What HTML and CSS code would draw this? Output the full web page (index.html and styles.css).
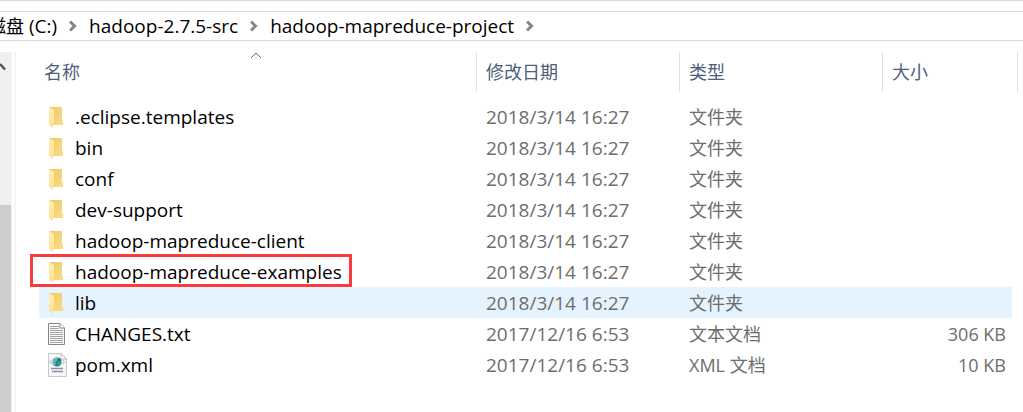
FILE: index.html
```html
<!DOCTYPE html>
<html lang="zh-CN">
<head>
<meta charset="utf-8">
<title>hadoop-mapreduce-project</title>
<link rel="stylesheet" href="styles.css">
</head>
<body>
<svg class="defs" width="0" height="0" aria-hidden="true">
  <defs>
    <linearGradient id="back" x1="0" y1="0" x2="1" y2="1"><stop offset="0" stop-color="#ebc968"/><stop offset="1" stop-color="#fddd85"/></linearGradient>
    <linearGradient id="front" x1="0" y1="0" x2="0" y2="1"><stop offset="0" stop-color="#ffeeb5"/><stop offset="1" stop-color="#fce094"/></linearGradient>
    <symbol id="folder" viewBox="0 0 20 24">
      <path d="M2 2H15V15L16 16V20H5L2 18Z" fill="url(#back)"/>
      <path d="M2 2L7 5V18L6 19V23L2 20Z" fill="url(#front)"/>
    </symbol>
    <symbol id="text-file" viewBox="0 0 20 24">
      <path d="M1.500 1.500H13L17.500 6V22.500H1.500Z" fill="#fafafa" stroke="#858585"/>
      <path d="M13 1.500V6H17.500" fill="#fff" stroke="#858585"/>
      <path d="M3 4.500H12M3 6.500H12M3 8.500H16M3 10.500H16M3 12.500H16M3 14.500H16M3 16.500H16M3 18.500H16M3 20.500H16" stroke="#a3a3a3"/>
    </symbol>
    <symbol id="xml-file" viewBox="0 0 20 24">
      <path d="M1.500 0.500H14L19.500 6V23.500H1.500Z" fill="#f7f7f7" stroke="#c9c9c9"/>
      <path d="M14 0.500V6H19.500Z" fill="#fff" stroke="#bdbdbd"/>
      <path d="M5 6.500L2.500 9L5 11.500M15 6.500L17.500 9L15 11.500" fill="none" stroke="#a8b2c8"/>
      <circle cx="10" cy="9" r="4.500" fill="#2374c8"/>
      <path d="M6 7Q8 4 11 5L10 8L8 9L9 11L8 13Q5 11 6 7Z" fill="#67bd99"/>
      <path d="M11 8L14 7Q15 11 12 13L10 11Z" fill="#33a853"/>
      <path d="M12 5L14 7L12 8Z" fill="#174b87"/>
      <path d="M4 15.500H16M5 18.500H16" stroke="#8e8ea8" stroke-width="1.500"/>
    </symbol>
    <symbol id="chevron" viewBox="0 0 8 12"><path d="M1 1.500L5.500 6L1 10.500" fill="none" stroke="#858585" stroke-width="3"/></symbol>
  </defs>
</svg>
<div class="window">
  <nav class="address">
    <ol class="crumbs">
      <li><a href="#"><span class="cjk">磁盘</span> (C:)</a><svg class="chevron"><use href="#chevron"/></svg></li>
      <li><a href="#">hadoop-2.7.5-src</a><svg class="chevron"><use href="#chevron"/></svg></li>
      <li><a href="#">hadoop-mapreduce-project</a><svg class="chevron"><use href="#chevron"/></svg></li>
    </ol>
  </nav>
  <div class="body">
    <div class="scrollbar">
      <svg class="scroll-up" viewBox="0 0 6 10"><path d="M0 2L5 7.500" fill="none" stroke="#505050" stroke-width="2.500"/></svg>
      <div class="thumb"></div>
    </div>
    <main class="content">
      <table class="files">
        <colgroup><col><col class="col-date"><col class="col-type"><col class="col-size"></colgroup>
        <thead>
          <tr>
            <th scope="col">名称<svg class="sort" viewBox="0 0 12 7"><path d="M1 6L6 1L11 6" fill="none" stroke="#666"/></svg></th>
            <th scope="col">修改日期</th><th scope="col">类型</th><th scope="col">大小</th>
          </tr>
        </thead>
        <tbody>
          <tr><td><span class="name"><svg class="icon"><use href="#folder"/></svg>.eclipse.templates</span></td><td class="date">2018/3/14 16:27</td><td>文件夹</td><td></td></tr>
          <tr><td><span class="name"><svg class="icon"><use href="#folder"/></svg>bin</span></td><td class="date">2018/3/14 16:27</td><td>文件夹</td><td></td></tr>
          <tr><td><span class="name"><svg class="icon"><use href="#folder"/></svg>conf</span></td><td class="date">2018/3/14 16:27</td><td>文件夹</td><td></td></tr>
          <tr><td><span class="name"><svg class="icon"><use href="#folder"/></svg>dev-support</span></td><td class="date">2018/3/14 16:27</td><td>文件夹</td><td></td></tr>
          <tr><td><span class="name"><svg class="icon"><use href="#folder"/></svg>hadoop-mapreduce-client</span></td><td class="date">2018/3/14 16:27</td><td>文件夹</td><td></td></tr>
          <tr><td><span class="name marked"><svg class="icon"><use href="#folder"/></svg>hadoop-mapreduce-examples</span></td><td class="date">2018/3/14 16:27</td><td>文件夹</td><td></td></tr>
          <tr class="hovered"><td><span class="name"><svg class="icon"><use href="#folder"/></svg>lib</span></td><td class="date">2018/3/14 16:27</td><td>文件夹</td><td></td></tr>
          <tr><td><span class="name"><svg class="icon"><use href="#text-file"/></svg>CHANGES.txt</span></td><td class="date">2017/12/16 6:53</td><td>文本文档</td><td>306 KB</td></tr>
          <tr><td><span class="name"><svg class="icon"><use href="#xml-file"/></svg>pom.xml</span></td><td class="date">2017/12/16 6:53</td><td>XML 文档</td><td>10 KB</td></tr>
        </tbody>
      </table>
    </main>
  </div>
</div>
</body>
</html>
```
FILE: styles.css
```css
* { box-sizing: border-box; }

body {
  margin: 0;
  background: #fff;
  color: #000;
  font: 18px/24px "Open Sans", "Noto Sans CJK SC", sans-serif;
}

.defs { position: absolute; }

.window {
  display: flex;
  flex-direction: column;
  min-height: 100vh;
  border-top: 1px solid #d9d9d9;
  overflow: hidden;
}

.address {
  margin-top: 10px;
  border: solid #d9d9d9;
  border-width: 1px 0;
}

.crumbs {
  display: flex;
  margin: 0 0 0 -12px;
  padding: 2px 0;
  list-style: none;
  font-size: 19px;
}

.cjk { font-size: 18px; }

.crumbs li {
  display: flex;
  align-items: center;
  white-space: nowrap;
}

.crumbs a { color: #000; text-decoration: none; }

.chevron {
  width: 8px;
  height: 12px;
  margin: 0 12px;
}

.body {
  display: flex;
  flex: 1;
  margin-top: 11px;
}

.scrollbar {
  display: flex;
  flex-direction: column;
  width: 12px;
  background: #f0f0f0;
}

.scroll-up {
  width: 6px;
  height: 10px;
  margin: 10px 0 133px;
}

.thumb {
  flex: 1;
  margin-right: 1px;
  background: #cdcdcd;
}

.content {
  flex: 1;
  margin-left: 2px;
  padding: 0 5px 0 23px;
  border-left: 2px solid #f5f5f5;
}

.files {
  width: 100%;
  table-layout: fixed;
  border-collapse: separate;
  border-spacing: 0;
}

.col-date, .col-type { width: 203px; }
.col-size { width: 135px; }

th {
  position: relative;
  height: 40px;
  padding: 0 0 0 9px;
  border-right: 1px solid #e2e2e2;
  color: #4c607a;
  font-weight: 400;
  text-align: left;
}

th:first-child { padding-left: 5px; }

.sort {
  position: absolute;
  top: 0;
  left: 50%;
  width: 12px;
  height: 7px;
  margin-left: -8px;
}

tbody::before {
  content: "";
  display: block;
  height: 9px;
}

td {
  height: 31px;
  padding: 0 0 0 9px;
  color: #6d6d6d;
  white-space: nowrap;
}

td:first-child { padding-left: 8px; color: #000; }

.date { font-size: 19px; }

td:last-child {
  padding-right: 6px;
  border-right: 6px solid transparent;
  background-clip: padding-box;
  text-align: right;
}

.name {
  display: inline-flex;
  align-items: center;
  gap: 8px;
  vertical-align: top;
  height: 31px;
  position: relative;
  font-size: 19px;
}

.icon { width: 20px; height: 24px; }

.marked::after {
  content: "";
  position: absolute;
  inset: -2px -10px 0 -17px;
  border: 3px solid #fb3b3b;
}

.hovered td { background-color: #e5f3ff; }
```
